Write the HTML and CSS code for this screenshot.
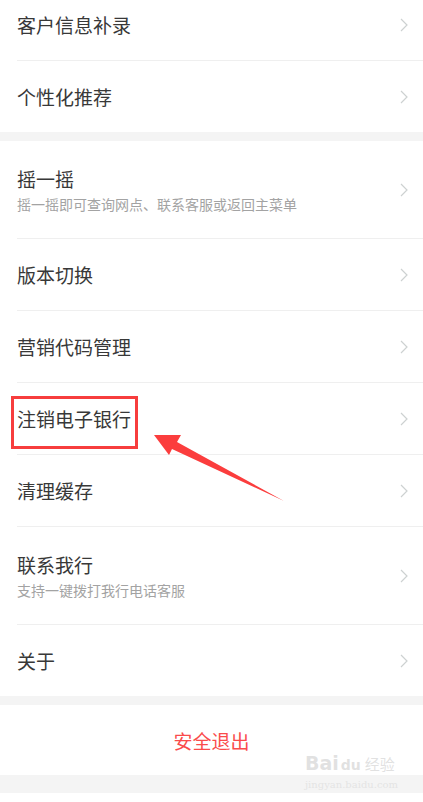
FILE: index.html
```html
<!DOCTYPE html>
<html lang="zh-CN">
<head>
  <meta charset="UTF-8">
  <meta name="viewport" content="width=device-width, initial-scale=1">
  <title>设置</title>
  <link rel="stylesheet" href="styles.css">
</head>
<body>
  <div class="page">
    <div class="group first">
      <div class="row">
        <span class="title">客户信息补录</span>
        <svg class="chevron" viewBox="0 0 8 14"><polyline points="1,1 7,7 1,13" /></svg>
      </div>
      <div class="row">
        <span class="title">个性化推荐</span>
        <svg class="chevron" viewBox="0 0 8 14"><polyline points="1,1 7,7 1,13" /></svg>
      </div>
    </div>

    <div class="group">
      <div class="row tall">
        <div class="texts">
          <span class="title">摇一摇</span>
          <span class="sub">摇一摇即可查询网点、联系客服或返回主菜单</span>
        </div>
        <svg class="chevron" viewBox="0 0 8 14"><polyline points="1,1 7,7 1,13" /></svg>
      </div>
      <div class="row">
        <span class="title">版本切换</span>
        <svg class="chevron" viewBox="0 0 8 14"><polyline points="1,1 7,7 1,13" /></svg>
      </div>
      <div class="row">
        <span class="title">营销代码管理</span>
        <svg class="chevron" viewBox="0 0 8 14"><polyline points="1,1 7,7 1,13" /></svg>
      </div>
      <div class="row">
        <span class="title">注销电子银行</span>
        <span class="mark-box"></span>
        <svg class="chevron" viewBox="0 0 8 14"><polyline points="1,1 7,7 1,13" /></svg>
      </div>
      <div class="row">
        <span class="title">清理缓存</span>
        <svg class="chevron" viewBox="0 0 8 14"><polyline points="1,1 7,7 1,13" /></svg>
      </div>
      <div class="row tall">
        <div class="texts">
          <span class="title">联系我行</span>
          <span class="sub">支持一键拨打我行电话客服</span>
        </div>
        <svg class="chevron" viewBox="0 0 8 14"><polyline points="1,1 7,7 1,13" /></svg>
      </div>
      <div class="row">
        <span class="title">关于</span>
        <svg class="chevron" viewBox="0 0 8 14"><polyline points="1,1 7,7 1,13" /></svg>
      </div>
    </div>

    <div class="group">
      <div class="logout">安全退出</div>
    </div>

    <div class="bottom-band"></div>

    <!-- annotation arrow pointing at the boxed item -->
    <svg class="mark-arrow" width="423" height="802" viewBox="0 0 423 802">
      <polygon points="154,435 181,435 177,442 284,501 172,449 169,455" />
    </svg>

    <div class="watermark">
      <div class="wm-logo"><b>Bai</b><span class="wm-du">du</span><span class="wm-cn">经验</span></div>
      <div class="wm-url">jingyan.baidu.com</div>
    </div>
  </div>
</body>
</html>
```

FILE: styles.css
```css
* {
  box-sizing: border-box;
}

html,
body {
  margin: 0;
  padding: 0;
  background: #ffffff;
}

body {
  font-family: "Noto Sans CJK SC", "Noto Sans", sans-serif;
  color: #353535;
  overflow: hidden;
}

.page {
  position: relative;
  display: flex;
  flex-direction: column;
  height: 802px;
  background: #f4f4f4;
}

.group {
  background: #ffffff;
  margin-bottom: 9px;
}

.group.first {
  margin-top: -11px;
}

.row {
  position: relative;
  display: flex;
  align-items: center;
  justify-content: space-between;
  height: 72px;
  margin-left: 17px;
  padding-right: 15px;
  border-bottom: 1px solid #efefef;
}

.group .row:last-child {
  height: 71px;
  border-bottom: none;
}

.row.tall {
  height: 98px;
}

.title {
  font-size: 19px;
  line-height: 26px;
  color: #383838;
}

.texts {
  display: flex;
  flex-direction: column;
  gap: 2px;
}

.sub {
  font-size: 14px;
  line-height: 20px;
  color: #a3a3a3;
}

.chevron {
  width: 8px;
  height: 14px;
  fill: none;
  stroke: #cdd1d1;
  stroke-width: 1.2;
}

.logout {
  height: 70px;
  display: flex;
  align-items: center;
  justify-content: center;
  font-size: 19px;
  color: #fa4b4b;
}

.group:nth-child(3) {
  margin-bottom: 18px;
}

.bottom-band {
  flex: 1;
  background: #ffffff;
}

.mark-box {
  position: absolute;
  left: -6px;
  top: 13px;
  width: 127px;
  height: 53px;
  border: 3px solid #f73d3d;
}

.mark-arrow {
  position: absolute;
  left: 0;
  top: 0;
  fill: #fb3d3d;
}

.watermark {
  position: absolute;
  left: 305px;
  top: 750px;
  white-space: nowrap;
  color: rgba(215, 215, 215, 0.75);
  font-family: "DejaVu Sans", sans-serif;
}

.wm-logo {
  display: flex;
  align-items: baseline;
  font-size: 19px;
  line-height: 26px;
}

.wm-du {
  font-size: 14px;
  font-weight: bold;
  margin-left: 2px;
}

.wm-cn {
  font-family: "Noto Sans CJK SC", sans-serif;
  font-size: 15px;
  margin-left: 4px;
}

.wm-url {
  font-family: "DejaVu Serif", serif;
  font-size: 10px;
  line-height: 14px;
  color: rgba(225, 225, 225, 0.85);
}
```
